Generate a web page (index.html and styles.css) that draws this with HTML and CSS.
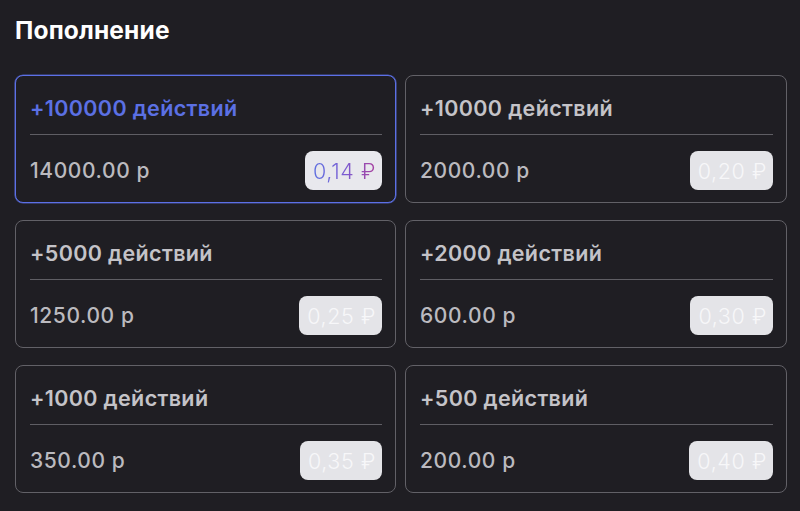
FILE: index.html
```html
<!DOCTYPE html>
<html lang="ru">
<head>
<meta charset="utf-8">
<title>Пополнение</title>
<link rel="stylesheet" href="styles.css">
</head>
<body>
<main class="page">
  <h1 class="title">Пополнение</h1>
  <div class="grid">
    <div class="card card--active">
      <div class="card__head">+100000 действий</div>
      <div class="card__foot">
        <span class="card__price">14000.00 р</span>
        <span class="badge badge--active"><span class="badge__grad">0,14 ₽</span></span>
      </div>
    </div>
    <div class="card">
      <div class="card__head">+10000 действий</div>
      <div class="card__foot">
        <span class="card__price">2000.00 р</span>
        <span class="badge">0,20 ₽</span>
      </div>
    </div>
    <div class="card">
      <div class="card__head">+5000 действий</div>
      <div class="card__foot">
        <span class="card__price">1250.00 р</span>
        <span class="badge">0,25 ₽</span>
      </div>
    </div>
    <div class="card">
      <div class="card__head">+2000 действий</div>
      <div class="card__foot">
        <span class="card__price">600.00 р</span>
        <span class="badge">0,30 ₽</span>
      </div>
    </div>
    <div class="card">
      <div class="card__head">+1000 действий</div>
      <div class="card__foot">
        <span class="card__price">350.00 р</span>
        <span class="badge">0,35 ₽</span>
      </div>
    </div>
    <div class="card">
      <div class="card__head">+500 действий</div>
      <div class="card__foot">
        <span class="card__price">200.00 р</span>
        <span class="badge">0,40 ₽</span>
      </div>
    </div>
  </div>
</main>
</body>
</html>
```
FILE: styles.css
```css
html, body {
  margin: 0;
  padding: 0;
  background: #1f1e23;
}
body {
  font-family: Inter, "Noto Sans", "Liberation Sans", sans-serif;
  color: #c2c1c6;
}
.page {
  padding: 14px 14px 0 15px;
}
.title {
  margin: 0;
  font-size: 24.5px;
  line-height: 32px;
  font-weight: 700;
  color: #ffffff;
  letter-spacing: 0.15px;
}
.grid {
  margin-top: 29px;
  display: grid;
  grid-template-columns: 381px 382px;
  column-gap: 9px;
  row-gap: 17px;
}
.card {
  border: 1px solid #626167;
  border-radius: 8px;
  padding: 0 13px 0 14px;
  background: #1f1e23;
}
.card--active {
  border-color: #5c70e6;
  box-shadow: 0 0 0 0.6px rgba(92, 112, 230, 0.7);
}
.card__head {
  padding: 20px 0 14px;
  line-height: 24px;
  font-size: 21.5px;
  font-weight: 600;
  letter-spacing: 0.35px;
  color: #c4c3c8;
  border-bottom: 1px solid #5f5e64;
}
.card--active .card__head {
  color: #5b70e4;
}
.card__foot {
  display: flex;
  justify-content: space-between;
  align-items: center;
  padding: 16px 0 12px;
}
.card__price {
  font-size: 21px;
  font-weight: 500;
  letter-spacing: 0.6px;
  color: #bbbabf;
}
.badge {
  display: inline-flex;
  align-items: center;
  justify-content: center;
  height: 39px;
  padding: 0 6px 0 8px;
  border-radius: 8px;
  background: #e4e4e8;
  color: #f7f7f9;
  font-size: 21.5px;
  font-weight: 300;
  letter-spacing: 0.6px;
}
.badge--active {
  background: #e8e8ed;
}
.badge__grad {
  color: transparent;
  background-image: linear-gradient(90deg, #5d6fe0 0%, #7a5cd2 50%, #a8409e 100%);
  -webkit-background-clip: text;
  background-clip: text;
}
```
